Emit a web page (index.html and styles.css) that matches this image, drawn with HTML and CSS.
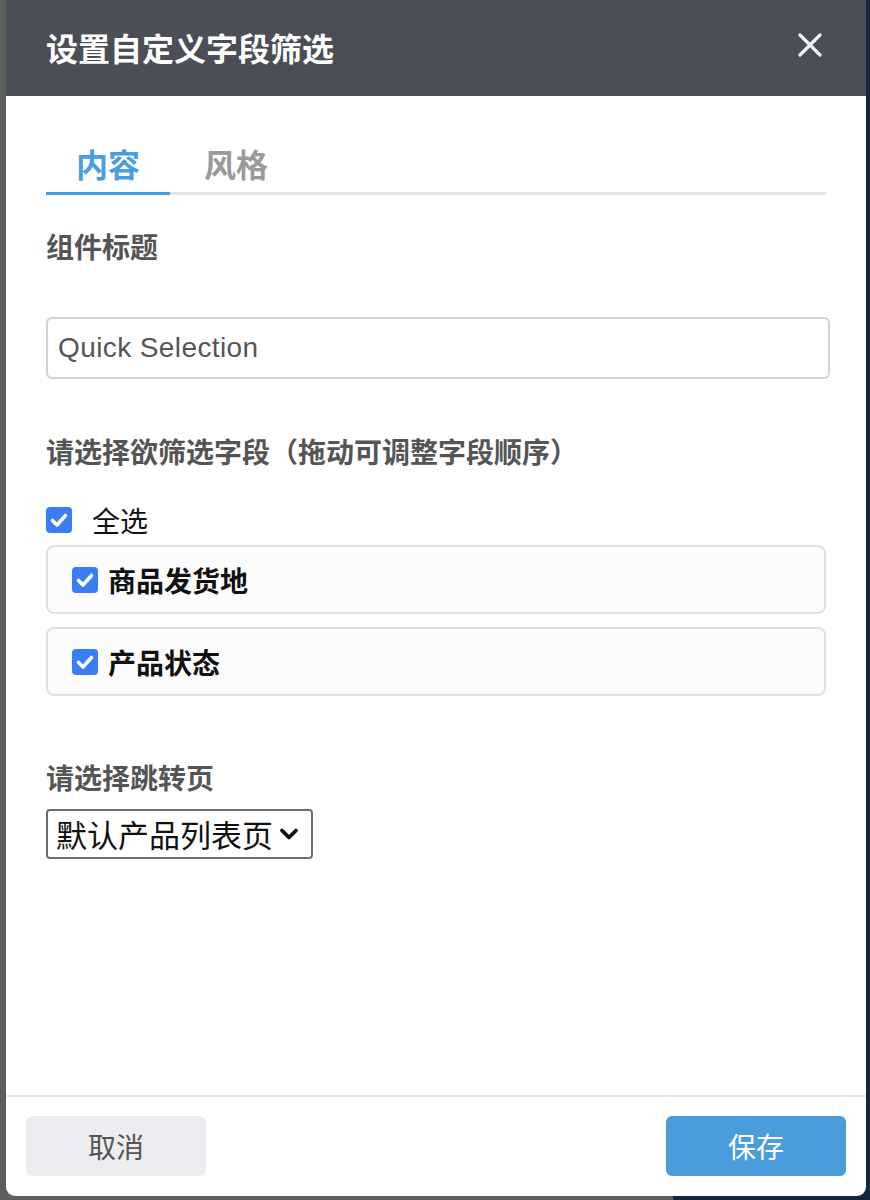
FILE: index.html
```html
<!DOCTYPE html>
<html lang="zh-CN">
<head>
<meta charset="utf-8">
<title>设置自定义字段筛选</title>
<link rel="stylesheet" href="styles.css">
</head>
<body>
<div class="modal">
  <div class="modal-header">
    <div class="modal-title">设置自定义字段筛选</div>
    <svg class="close-icon" width="24" height="24" viewBox="0 0 24 24"><path d="M2 2 L22 22 M22 2 L2 22" stroke="#f2f2f2" stroke-width="3.2" stroke-linecap="round"/></svg>
  </div>
  <div class="modal-body">
    <div class="tabs">
      <div class="tab active">内容</div>
      <div class="tab second-tab">风格</div>
    </div>
    <div class="field-label first">组件标题</div>
    <input class="text-input" type="text" value="Quick Selection">
    <div class="field-label second">请选择欲筛选字段（拖动可调整字段顺序）</div>
    <div class="select-all">
      <span class="check"><svg width="26" height="26" viewBox="0 0 26 26"><path d="M6.5 13.5 L11 18 L19.5 8.5" fill="none" stroke="#fff" stroke-width="3.6" stroke-linecap="round" stroke-linejoin="round"/></svg></span>
      <span class="select-all-text">全选</span>
    </div>
    <div class="field-list">
      <div class="field-item">
        <span class="check"><svg width="26" height="26" viewBox="0 0 26 26"><path d="M6.5 13.5 L11 18 L19.5 8.5" fill="none" stroke="#fff" stroke-width="3.6" stroke-linecap="round" stroke-linejoin="round"/></svg></span>
        <span class="field-name">商品发货地</span>
      </div>
      <div class="field-item">
        <span class="check"><svg width="26" height="26" viewBox="0 0 26 26"><path d="M6.5 13.5 L11 18 L19.5 8.5" fill="none" stroke="#fff" stroke-width="3.6" stroke-linecap="round" stroke-linejoin="round"/></svg></span>
        <span class="field-name">产品状态</span>
      </div>
    </div>
    <div class="field-label third">请选择跳转页</div>
    <div class="page-select">
      <span class="page-select-text">默认产品列表页</span>
      <svg width="20" height="14" viewBox="0 0 20 14"><path d="M3 3.5 L10 10.5 L17 3.5" fill="none" stroke="#111" stroke-width="3.8" stroke-linecap="round" stroke-linejoin="round"/></svg>
    </div>
  </div>
  <div class="modal-footer">
    <button class="btn btn-cancel">取消</button>
    <button class="btn btn-save">保存</button>
  </div>
</div>
</body>
</html>
```

FILE: styles.css
```css
html, body {
  margin: 0;
  padding: 0;
}
body {
  width: 870px;
  height: 1200px;
  overflow: hidden;
  background: linear-gradient(to right, #5e5e5e 673px, #15273e 673px);
  font-family: "Noto Sans CJK SC", "Liberation Sans", sans-serif;
}
.modal {
  margin-left: 6px;
  width: 860px;
  height: 1196px;
  background: #fff;
  border-radius: 0 0 9px 9px;
  display: flex;
  flex-direction: column;
  overflow: hidden;
}
.modal-header {
  height: 96px;
  flex: none;
  background: #4b4e56;
  display: flex;
  align-items: center;
  justify-content: space-between;
  padding: 0 44px 0 40px;
  box-sizing: border-box;
}
.modal-title {
  color: #fff;
  font-size: 32px;
  font-weight: 700;
  line-height: 40px;
  margin-top: -2px;
}
.close-icon {
  display: block;
  margin-top: -7px;
}
.modal-body {
  padding: 0 40px;
  display: flex;
  flex-direction: column;
  align-items: flex-start;
}
.tabs {
  margin-top: 45px;
  align-self: stretch;
  display: flex;
  border-bottom: 3px solid #e4e4e4;
}
.tab {
  width: 124px;
  text-align: center;
  font-size: 32px;
  font-weight: 700;
  line-height: 44px;
  padding-bottom: 7px;
  color: #9a9a9a;
  margin-bottom: -3px;
  border-bottom: 3px solid transparent;
}
.tab.second-tab {
  width: 132px;
}
.tab.active {
  color: #4a9ddf;
  border-bottom-color: #4a9ddf;
}
.field-label {
  font-size: 28px;
  font-weight: 700;
  line-height: 40px;
  color: #555;
}
.field-label.first { margin-top: 31px; }
.field-label.second { margin-top: 52px; }
.field-label.third { margin-top: 61px; }
.text-input {
  margin-top: 51px;
  width: calc(100% + 4px);
  height: 62px;
  box-sizing: border-box;
  border: 2px solid #d2d2d2;
  border-radius: 6px;
  padding: 0 10px;
  font-family: "Liberation Sans", sans-serif;
  font-size: 28px;
  letter-spacing: 0.4px;
  color: #555;
  outline: none;
}
.check {
  width: 26px;
  height: 26px;
  flex: none;
  background: #3a7ef5;
  border-radius: 4px;
  display: flex;
}
.select-all {
  margin-top: 29px;
  height: 40px;
  display: flex;
  align-items: center;
  gap: 20px;
}
.select-all-text {
  font-size: 28px;
  color: #111;
  line-height: 40px;
}
.field-list {
  margin-top: 5px;
  align-self: stretch;
  display: flex;
  flex-direction: column;
  gap: 13px;
}
.field-item {
  height: 69px;
  box-sizing: border-box;
  border: 2px solid #e0e0e0;
  border-radius: 8px;
  background: #fcfcfc;
  display: flex;
  align-items: center;
  padding-left: 24px;
  gap: 10px;
}
.field-name {
  font-size: 28px;
  font-weight: 700;
  color: #111;
  line-height: 40px;
}
.page-select {
  margin-top: 12px;
  width: 267px;
  height: 50px;
  box-sizing: border-box;
  border: 2px solid #6d6d6d;
  border-radius: 4px;
  display: flex;
  align-items: center;
  padding: 0 7px 0 8px;
  gap: 6px;
}
.page-select-text {
  font-size: 31px;
  color: #111;
  line-height: 40px;
}
.modal-footer {
  margin-top: auto;
  border-top: 2px solid #e8e8e8;
  padding: 19px 20px 20px;
  display: flex;
  justify-content: space-between;
}
.btn {
  width: 180px;
  height: 60px;
  border: none;
  border-radius: 6px;
  font-family: "Noto Sans CJK SC", sans-serif;
  font-size: 28px;
}
.btn-cancel {
  background: #ecedf0;
  color: #555;
}
.btn-save {
  background: #4a9ddd;
  color: #fff;
}
```
